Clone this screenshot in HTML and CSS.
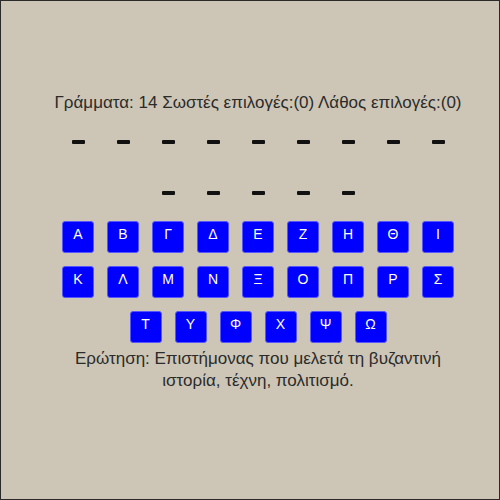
FILE: index.html
```html
<!DOCTYPE html>
<html lang="el">
<head>
<meta charset="utf-8">
<link rel="stylesheet" href="styles.css">
</head>
<body>
<div class="frame">
  <div class="stats">Γράμματα: 14 Σωστές επιλογές:(0) Λάθος επιλογές:(0)</div>
  <div class="word">
    <div class="row r1">
      <span class="slot"><i></i></span><span class="slot"><i></i></span><span class="slot"><i></i></span>
      <span class="slot"><i></i></span><span class="slot"><i></i></span><span class="slot"><i></i></span>
      <span class="slot"><i></i></span><span class="slot"><i></i></span><span class="slot"><i></i></span>
    </div>
    <div class="row r2">
      <span class="slot"><i></i></span><span class="slot"><i></i></span><span class="slot"><i></i></span>
      <span class="slot"><i></i></span><span class="slot"><i></i></span>
    </div>
  </div>
  <div class="keys">
    <div class="krow">
      <button class="key">Α</button><button class="key">Β</button><button class="key">Γ</button>
      <button class="key">Δ</button><button class="key">Ε</button><button class="key">Ζ</button>
      <button class="key">Η</button><button class="key">Θ</button><button class="key">Ι</button>
    </div>
    <div class="krow">
      <button class="key">Κ</button><button class="key">Λ</button><button class="key">Μ</button>
      <button class="key">Ν</button><button class="key">Ξ</button><button class="key">Ο</button>
      <button class="key">Π</button><button class="key">Ρ</button><button class="key">Σ</button>
    </div>
    <div class="krow">
      <button class="key">Τ</button><button class="key">Υ</button><button class="key">Φ</button>
      <button class="key">Χ</button><button class="key">Ψ</button><button class="key">Ω</button>
    </div>
  </div>
  <div class="question">Ερώτηση: Επιστήμονας που μελετά τη βυζαντινή<br>ιστορία, τέχνη, πολιτισμό.</div>
</div>
</body>
</html>
```

FILE: styles.css
```css
html, body {
  margin: 0;
  padding: 0;
}
.frame {
  box-sizing: border-box;
  width: 500px;
  height: 500px;
  border: 1px solid #2a2a2a;
  background: #cdc6b6;
  padding: 92px 0 0 16px;
  display: flex;
  flex-direction: column;
  align-items: center;
  font-family: "Liberation Sans", Arial, sans-serif;
  color: #2b2b2b;
}
.stats {
  font-size: 17px;
  line-height: 20px;
  white-space: nowrap;
}
.word {
  display: flex;
  flex-direction: column;
  align-items: center;
  gap: 47px;
  margin-top: 27px;
}
.row {
  display: flex;
}
.slot {
  width: 45px;
  height: 4px;
  display: flex;
  justify-content: center;
}
.slot i {
  display: block;
  width: 13px;
  height: 4px;
  background: #111;
  border-radius: 1px;
}
.keys {
  display: flex;
  flex-direction: column;
  align-items: center;
  gap: 13px;
  margin-top: 26px;
}
.krow {
  display: flex;
  gap: 13px;
}
.key {
  box-sizing: border-box;
  width: 32px;
  height: 32px;
  margin: 0;
  padding: 4px 0 0;
  border: 1px solid #5656ff;
  border-radius: 3px;
  background: #0000ff;
  color: #fff;
  font-family: "Liberation Sans", Arial, sans-serif;
  font-size: 14px;
  line-height: 16px;
  display: flex;
  justify-content: center;
  align-items: flex-start;
}
.question {
  margin-top: 5px;
  font-size: 17px;
  line-height: 22px;
  text-align: center;
  white-space: nowrap;
}
```
